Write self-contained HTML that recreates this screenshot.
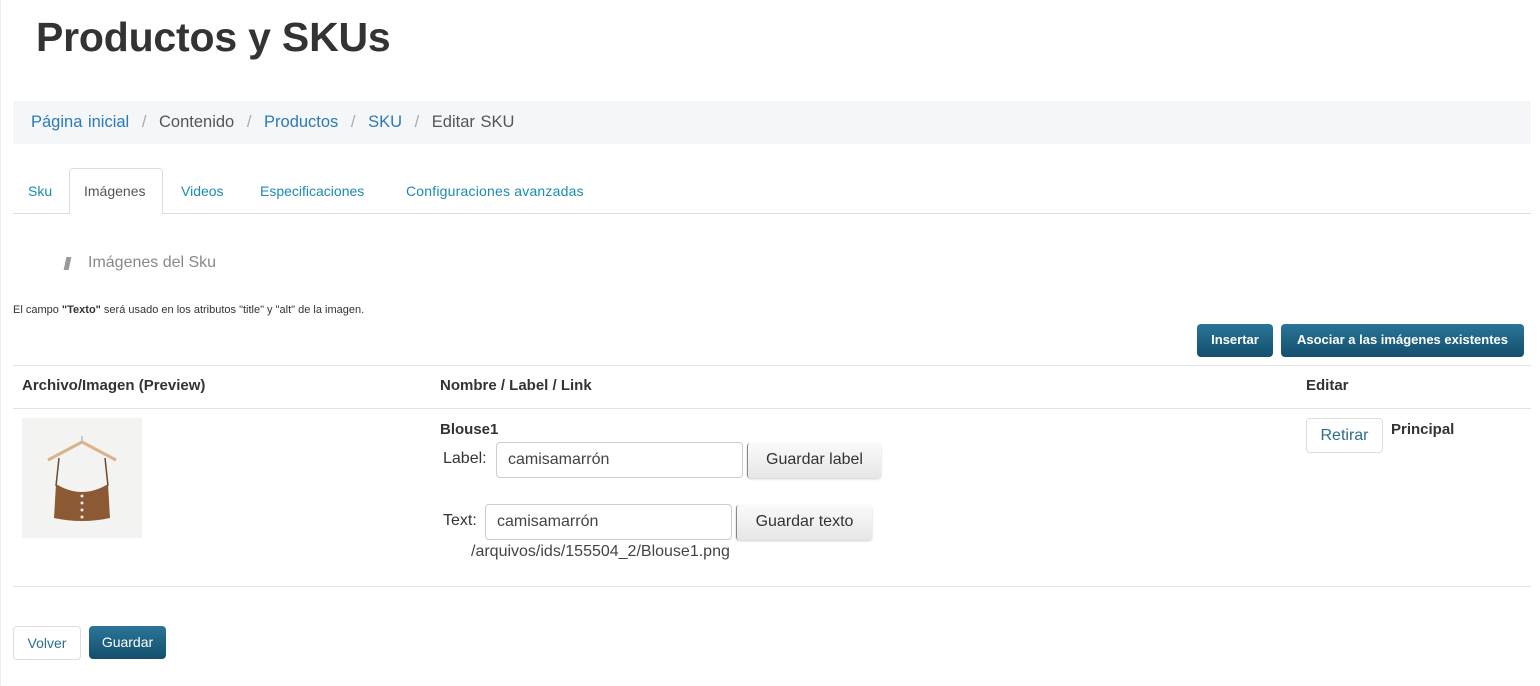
<!DOCTYPE html>
<html><head><meta charset="utf-8"><style>
*{box-sizing:border-box;margin:0;padding:0}
body{width:1540px;height:686px;background:#fff;font-family:"Liberation Sans",sans-serif;color:#333;position:relative;overflow:hidden}
.a{position:absolute;white-space:nowrap}
h1{position:absolute;left:36px;top:14px;font-size:41px;font-weight:bold;color:#333;letter-spacing:-0.2px}
.bc{position:absolute;left:13px;top:101px;width:1518px;height:43px;background:#f5f6f8}
.lnk{color:#2a7ab8}
.tabline{position:absolute;left:13px;top:213px;width:1518px;height:1px;background:#ddd}
.tab{position:absolute;top:183px;font-size:14px;color:#1a8bb5}
.btn{position:absolute;background:linear-gradient(#2a7599,#134f6c);color:#fff;font-size:13px;font-weight:bold;border-radius:4px;text-align:center;line-height:32px;height:33px}
.hr{position:absolute;left:13px;width:1518px;height:1px;background:#e2e2e2}
.th{position:absolute;top:377px;font-size:15px;font-weight:bold;color:#333}
.inp{position:absolute;border:1px solid #ccc;border-radius:4px;height:36px;font-size:16px;color:#444;line-height:34px;padding-left:11px}
.gbtn{position:absolute;background:linear-gradient(#fafafa,#e6e6e6);border-left:1px solid #888;border-radius:3px;font-size:16px;color:#333;text-align:center;height:35px;line-height:34px;box-shadow:0 1px 2px rgba(0,0,0,.2)}
</style></head><body>
<div style="position:absolute;left:0;top:0;width:1px;height:686px;background:#eee"></div>
<h1>Productos y SKUs</h1>
<div class="bc"></div>
<div class="a" style="left:31px;top:113px;font-size:16.5px;color:#555;word-spacing:1px"><span class="lnk">Página inicial</span> <span style="color:#aaa;margin:0 7px">/</span> Contenido <span style="color:#aaa;margin:0 7px">/</span> <span class="lnk">Productos</span> <span style="color:#aaa;margin:0 7px">/</span> <span class="lnk">SKU</span> <span style="color:#aaa;margin:0 7px">/</span> Editar SKU</div>
<div class="tabline"></div>
<div style="position:absolute;left:69px;top:168px;width:94px;height:46px;border:1px solid #ddd;border-bottom:none;border-radius:4px 4px 0 0;background:#fff"></div>
<div class="tab" style="left:28px">Sku</div>
<div class="tab" style="left:84px;color:#555">Imágenes</div>
<div class="tab" style="left:181px">Videos</div>
<div class="tab" style="left:260px">Especificaciones</div>
<div class="tab" style="left:406px;letter-spacing:0.2px">Configuraciones avanzadas</div>
<div style="position:absolute;left:65px;top:257px;width:5px;height:13px;background:#999;transform:skewX(-12deg)"></div>
<div class="a" style="left:88px;top:254px;font-size:16px;color:#888">Imágenes del Sku</div>
<div class="a" style="left:13px;top:304px;font-size:11px;color:#333">El campo <b>"Texto"</b> será usado en los atributos "title" y "alt" de la imagen.</div>
<div class="btn" style="left:1197px;top:324px;width:76px">Insertar</div>
<div class="btn" style="left:1281px;top:324px;width:243px">Asociar a las imágenes existentes</div>
<div class="hr" style="top:365px"></div>
<div class="th" style="left:22px">Archivo/Imagen (Preview)</div>
<div class="th" style="left:440px">Nombre / Label / Link</div>
<div class="th" style="left:1306px">Editar</div>
<div class="hr" style="top:408px"></div>
<div style="position:absolute;left:22px;top:418px;width:120px;height:120px;background:#f3f3f1">
<svg width="120" height="120" viewBox="0 0 120 120"><path d="M26 42 L60 24 L94 42" stroke="#d9b48a" stroke-width="3" fill="none"/><path d="M60 18 L60 25" stroke="#bbb" stroke-width="1.5"/><path d="M37 40 L34 68 M83 40 L86 68" stroke="#6b4a30" stroke-width="1.5"/><path d="M34 66 Q60 82 86 66 L88 100 Q60 106 32 100 Z" fill="#8b5a34"/><circle cx="60" cy="78" r="1.5" fill="#eee"/><circle cx="60" cy="85" r="1.5" fill="#eee"/><circle cx="60" cy="92" r="1.5" fill="#eee"/><circle cx="60" cy="99" r="1.5" fill="#eee"/></svg>
</div>
<div class="a" style="left:440px;top:421px;font-size:15px;font-weight:bold">Blouse1</div>
<div class="a" style="left:443px;top:450px;font-size:16px">Label:</div>
<div class="inp" style="left:496px;top:442px;width:247px">camisamarrón</div>
<div class="gbtn" style="left:747px;top:443px;width:134px">Guardar label</div>
<div class="a" style="left:443px;top:512px;font-size:16px">Text:</div>
<div class="inp" style="left:485px;top:504px;width:247px">camisamarrón</div>
<div class="gbtn" style="left:736px;top:505px;width:136px">Guardar texto</div>
<div class="a" style="left:471px;top:543px;font-size:16px;color:#444">/arquivos/ids/155504_2/Blouse1.png</div>
<div style="position:absolute;left:1306px;top:418px;width:77px;height:35px;border:1px solid #ddd;border-radius:4px;color:#2c6e8e;font-size:16px;text-align:center;line-height:33px">Retirar</div>
<div class="a" style="left:1391px;top:421px;font-size:15px;font-weight:bold">Principal</div>
<div class="hr" style="top:586px"></div>
<div style="position:absolute;left:13px;top:626px;width:68px;height:34px;border:1px solid #ddd;border-radius:4px;color:#2c6e8e;font-size:14px;text-align:center;line-height:32px">Volver</div>
<div class="btn" style="left:89px;top:626px;width:77px;height:33px;font-weight:normal;font-size:14px">Guardar</div>
</body></html>
